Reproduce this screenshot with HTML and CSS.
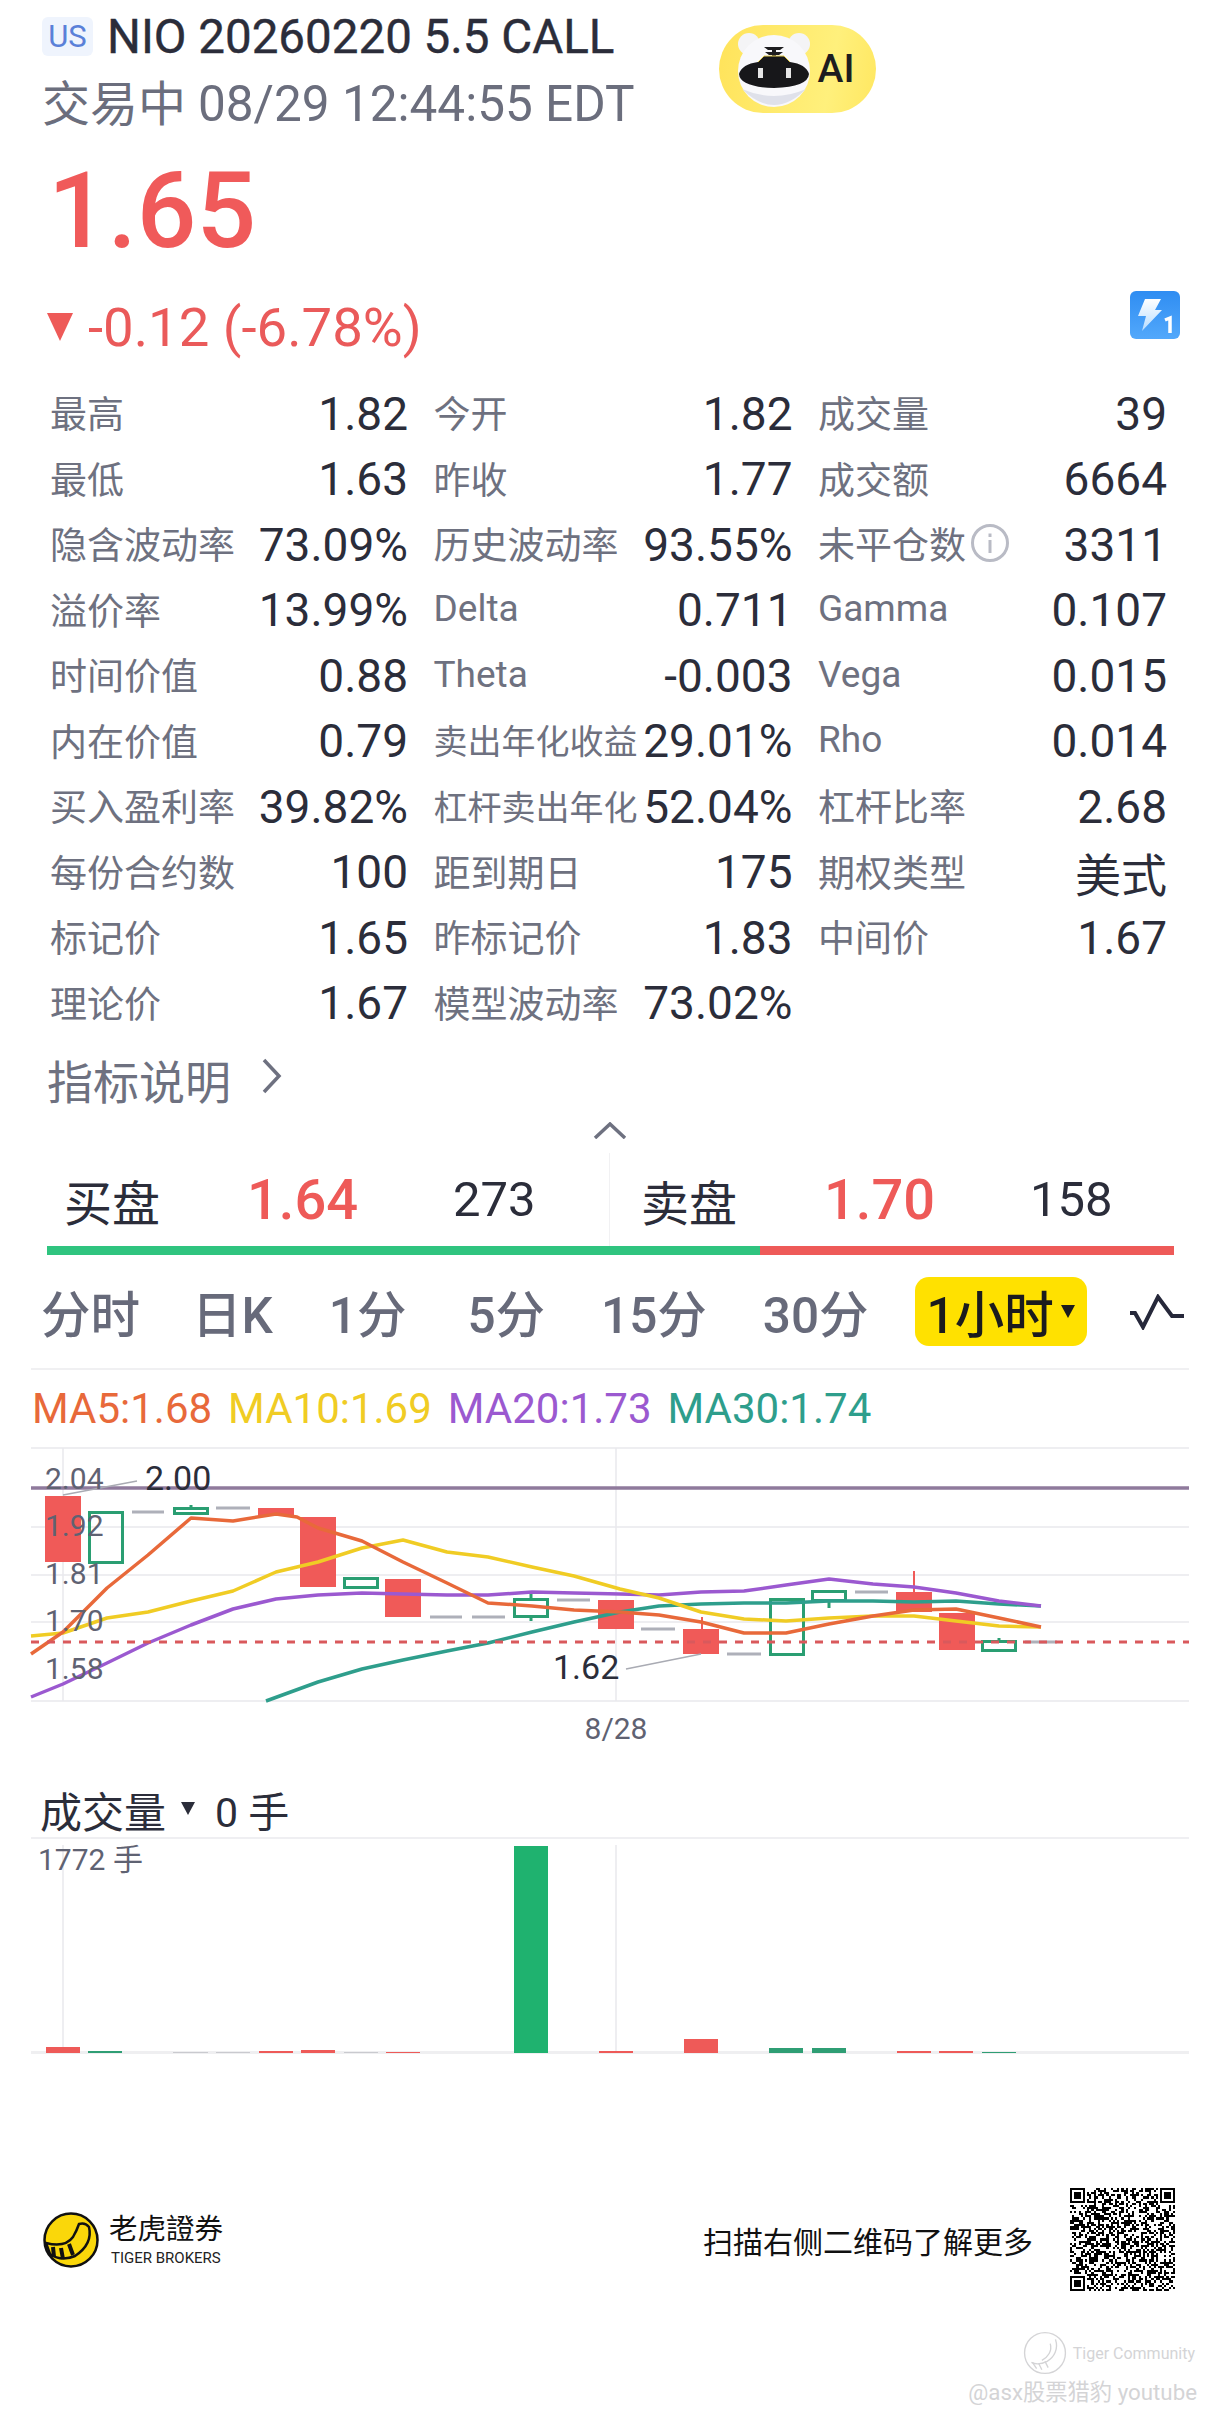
FILE: index.html
```html
<!DOCTYPE html>
<html lang="zh-CN">
<head>
  <meta charset="UTF-8">
  <meta name="viewport" content="width=device-width, initial-scale=1.0">
  <title>NIO 20260220 5.5 CALL</title>
  <link rel="stylesheet" href="styles.css">
</head>
<body>
  <div id="page">
    <header class="head">
      <div class="head-text">
        <div class="title-row">
          <span class="badge">US</span>
          <span class="title">NIO 20260220 5.5 CALL</span>
        </div>
        <div class="status">交易中 <span class="status-time">08/29 12:44:55 EDT</span></div>
      </div>
      <div class="ai-pill">
        <svg class="ai-face" viewBox="0 0 76 80" width="76" height="80">
          <circle cx="13" cy="15" r="11" fill="#f4f4f6"/>
          <circle cx="63" cy="15" r="11" fill="#f4f4f6"/>
          <ellipse cx="38" cy="42" rx="36" ry="36" fill="#f8f8fb"/>
          <path d="M6 60 Q38 92 70 60 Q38 74 6 60Z" fill="#dfe1ea"/>
          <path d="M28 18h20l-4 3h-4v2h7l-4 3h-3v3h-4v-3h-3l-4-3h7v-2h-4z" fill="#1d1d20"/>
          <path d="M3 45 Q6 35 22 33 L28 27 H48 L54 33 Q70 35 73 45 Q72 58 38 59 Q4 58 3 45Z" fill="#17171a"/>
          <path d="M22 33 L28 27 H48 L54 33" fill="none" stroke="#e6cf52" stroke-width="1"/>
          <rect x="22" y="39" width="5" height="10" fill="#e6e6e6"/>
          <rect x="50" y="39" width="5" height="10" fill="#e6e6e6"/>
        </svg>
        <span class="ai-text">AI</span>
      </div>
    </header>

    <div class="price">1.65</div>
    <div class="change">
      <span class="arrow"></span>
      <span class="change-text">-0.12 (-6.78%)</span>
      <svg class="bolt" viewBox="0 0 50 48" width="50" height="48">
        <defs>
          <linearGradient id="boltBg" x1="0" y1="0" x2="0" y2="1">
            <stop offset="0" stop-color="#2f8df2"/>
            <stop offset="1" stop-color="#52a8fb"/>
          </linearGradient>
          <linearGradient id="boltFg" x1="0" y1="0" x2="0" y2="1">
            <stop offset="0" stop-color="#ffffff"/>
            <stop offset="1" stop-color="#b6dcff"/>
          </linearGradient>
        </defs>
        <rect width="50" height="48" rx="6" fill="url(#boltBg)"/>
        <path d="M15 8h16l-6 11h7L12 40l4-15h-8z" fill="url(#boltFg)"/>
        <path d="M35 29l5-2v15" fill="none" stroke="#fff" stroke-width="3.5"/>
      </svg>
    </div>

    <div class="stats">
      <div class="cell"><span class="lbl">最高</span><span class="val">1.82</span></div>
      <div class="cell"><span class="lbl">今开</span><span class="val">1.82</span></div>
      <div class="cell"><span class="lbl">成交量</span><span class="val vr">39</span></div>

      <div class="cell"><span class="lbl">最低</span><span class="val">1.63</span></div>
      <div class="cell"><span class="lbl">昨收</span><span class="val">1.77</span></div>
      <div class="cell"><span class="lbl">成交额</span><span class="val">6664</span></div>

      <div class="cell"><span class="lbl">隐含波动率</span><span class="val">73.09%</span></div>
      <div class="cell"><span class="lbl">历史波动率</span><span class="val">93.55%</span></div>
      <div class="cell"><span class="lbl lbl-info">未平仓数
        <svg class="info" viewBox="0 0 40 40" width="40" height="40"><circle cx="20" cy="20" r="17.5" fill="none" stroke="#b9bbc5" stroke-width="3"/><rect x="18.5" y="17" width="3" height="13" fill="#b9bbc5"/><rect x="18.5" y="10.500" width="3" height="3.500" fill="#b9bbc5"/></svg>
      </span><span class="val">3311</span></div>

      <div class="cell"><span class="lbl">溢价率</span><span class="val">13.99%</span></div>
      <div class="cell"><span class="lbl">Delta</span><span class="val">0.711</span></div>
      <div class="cell"><span class="lbl">Gamma</span><span class="val">0.107</span></div>

      <div class="cell"><span class="lbl">时间价值</span><span class="val">0.88</span></div>
      <div class="cell"><span class="lbl">Theta</span><span class="val">-0.003</span></div>
      <div class="cell"><span class="lbl">Vega</span><span class="val">0.015</span></div>

      <div class="cell"><span class="lbl">内在价值</span><span class="val">0.79</span></div>
      <div class="cell"><span class="lbl lbl-small">卖出年化收益</span><span class="val">29.01%</span></div>
      <div class="cell"><span class="lbl">Rho</span><span class="val">0.014</span></div>

      <div class="cell"><span class="lbl">买入盈利率</span><span class="val">39.82%</span></div>
      <div class="cell"><span class="lbl lbl-small">杠杆卖出年化</span><span class="val">52.04%</span></div>
      <div class="cell"><span class="lbl">杠杆比率</span><span class="val">2.68</span></div>

      <div class="cell"><span class="lbl">每份合约数</span><span class="val">100</span></div>
      <div class="cell"><span class="lbl">距到期日</span><span class="val">175</span></div>
      <div class="cell"><span class="lbl">期权类型</span><span class="val">美式</span></div>

      <div class="cell"><span class="lbl">标记价</span><span class="val">1.65</span></div>
      <div class="cell"><span class="lbl">昨标记价</span><span class="val">1.83</span></div>
      <div class="cell"><span class="lbl">中间价</span><span class="val">1.67</span></div>

      <div class="cell"><span class="lbl">理论价</span><span class="val">1.67</span></div>
      <div class="cell"><span class="lbl">模型波动率</span><span class="val">73.02%</span></div>
    </div>

    <div class="explain">
      <span>指标说明</span>
      <svg viewBox="0 0 22 36" width="22" height="36"><path d="M3 2l15 16L3 34" fill="none" stroke="#6e7180" stroke-width="3.5"/></svg>
    </div>

    <svg class="collapse" viewBox="0 0 34 17" width="34" height="17"><path d="M2 16L17 2l15 14" fill="none" stroke="#6e7180" stroke-width="3.500"/></svg>

    <div class="book">
      <div class="side">
        <span class="side-lbl">买盘</span><span class="side-price">1.64</span><span class="side-qty">273</span>
      </div>
      <div class="side side-ask">
        <span class="side-lbl">卖盘</span><span class="side-price">1.70</span><span class="side-qty">158</span>
      </div>
    </div>
    <div class="ratio">
      <div class="ratio-buy"></div>
      <div class="ratio-sell"></div>
    </div>

    <nav class="tabs">
      <span class="tab">分时</span>
      <span class="tab">日K</span>
      <span class="tab">1分</span>
      <span class="tab">5分</span>
      <span class="tab">15分</span>
      <span class="tab">30分</span>
      <span class="tab-on">1小时<i class="caret"></i></span>
      <svg class="wave" viewBox="0 0 56 36" width="56" height="36"><path d="M1 19h5l8 14L29 3l14 19h12" fill="none" stroke="#26283a" stroke-width="4"/></svg>
    </nav>

    <div class="legend">
      <span class="ma5">MA5:1.68</span>
      <span class="ma10">MA10:1.69</span>
      <span class="ma20">MA20:1.73</span>
      <span class="ma30">MA30:1.74</span>
    </div>

    <svg class="chart" viewBox="0 1440 1220 345" width="1220" height="345">
      <g class="grid">
        <path d="M31 1448H1189M31 1527H1189M31 1575H1189M31 1622H1189M31 1701H1189M63 1448V1701M616 1448V1701"/>
      </g>
      <line class="high-line" x1="31" y1="1488" x2="1189" y2="1488"/>

      <g class="red">
        <rect x="45" y="1496" width="36" height="66"/>
        <rect x="258" y="1508" width="36" height="8"/>
        <rect x="300" y="1517" width="36" height="70"/>
        <rect x="385" y="1579" width="36" height="38"/>
        <rect x="598" y="1600" width="36" height="29"/>
        <rect x="683" y="1629" width="36" height="25"/>
        <rect x="701" y="1617" width="2" height="12"/>
        <rect x="896" y="1592" width="36" height="20"/>
        <rect x="913" y="1571" width="2" height="21"/>
        <rect x="939" y="1613" width="36" height="37"/>
      </g>
      <g class="green">
        <rect x="89.500" y="1512.500" width="33" height="50"/>
        <rect x="174.500" y="1508.500" width="33" height="5"/>
        <path d="M191 1505v3"/>
        <rect x="344.500" y="1578.500" width="33" height="9"/>
        <rect x="514.500" y="1599.500" width="33" height="17"/>
        <path d="M531 1592v7M531 1617v4"/>
        <rect x="770.500" y="1599.500" width="33" height="55"/>
        <rect x="812.500" y="1591.500" width="33" height="9"/>
        <path d="M829 1601v7"/>
        <rect x="982.500" y="1641.500" width="33" height="9"/>
        <path d="M999 1638v3"/>
      </g>
      <path class="flat" d="M132 1512h32M216 1508h34M430 1617h32M472 1617h33M557 1600h33M641 1629h34M727 1654h34M855 1592h33M1025 1642h32"/>

      <polyline class="line-ma30" points="266,1701 318,1682 362,1669 403,1660 447,1651 488,1643 532,1632 574,1622 620,1612 659,1606 701,1604 744,1603 786,1603 829,1601 873,1601 914,1602 956,1601 999,1604 1041,1606"/>
      <polyline class="line-ma20" points="31,1697 63,1684 107,1663 148,1643 191,1625 233,1609 276,1599 318,1595 362,1593 403,1594 447,1595 488,1595 532,1592 574,1593 620,1594 659,1595 701,1592 744,1591 786,1585 829,1579 873,1584 914,1587 956,1593 999,1601 1041,1606"/>
      <polyline class="line-ma10" points="31,1636 63,1633 107,1618 148,1612 191,1601 233,1591 276,1572 318,1562 362,1548 403,1540 447,1552 488,1557 532,1567 574,1576 620,1589 659,1598 701,1612 744,1619 786,1621 829,1618 873,1616 914,1616 956,1621 999,1626 1041,1627"/>
      <polyline class="line-ma5" points="31,1654 63,1632 107,1588 148,1555 191,1518 233,1521 276,1514 297,1517 318,1528 362,1541 403,1562 447,1583 488,1603 532,1606 574,1610 620,1612 659,1615 701,1622 744,1633 786,1633 829,1624 873,1616 914,1610 956,1609 999,1618 1041,1627"/>

      <line class="last-line" x1="31" y1="1642" x2="1189" y2="1642"/>

      <path class="leader" d="M63 1495L137 1481M626 1669L701 1654"/>
      <text class="axis" x="45" y="1489">2.04</text>
      <text class="axis" x="45" y="1536">1.92</text>
      <text class="axis" x="45" y="1584">1.81</text>
      <text class="axis" x="45" y="1631">1.70</text>
      <text class="axis" x="45" y="1679">1.58</text>
      <text class="mark" x="145" y="1490">2.00</text>
      <text class="mark" x="553" y="1679">1.62</text>
      <text class="axis date" x="616" y="1739">8/28</text>
    </svg>

    <div class="vol-head">成交量<i class="caret caret-dark"></i><span class="vol-now">0 手</span></div>

    <svg class="vol" viewBox="0 1840 1220 220" width="1220" height="220">
      <path class="grid" d="M63 1846V2053M616 1846V2053"/>
      <rect class="base" x="31" y="2052" width="1158" height="3"/>
      <rect class="vred" x="46" y="2048" width="34" height="6"/>
      <rect class="vdim" x="88" y="2052" width="34" height="2"/>
      <rect class="vgrey" x="173" y="2053" width="35" height="1"/>
      <rect class="vgrey" x="216" y="2053" width="34" height="1"/>
      <rect class="vred" x="259" y="2052" width="34" height="2"/>
      <rect class="vred" x="301" y="2051" width="34" height="3"/>
      <rect class="vgrey" x="344" y="2053" width="34" height="1"/>
      <rect class="vred" x="386" y="2053" width="34" height="1"/>
      <rect class="vbig" x="514" y="1847" width="34" height="207"/>
      <rect class="vred" x="599" y="2052" width="34" height="2"/>
      <rect class="vred" x="684" y="2040" width="34" height="14"/>
      <rect class="vdim" x="769" y="2049" width="34" height="5"/>
      <rect class="vdim" x="812" y="2049" width="34" height="5"/>
      <rect class="vred" x="897" y="2052" width="34" height="2"/>
      <rect class="vred" x="939" y="2052" width="34" height="2"/>
      <rect class="vdim" x="982" y="2053" width="34" height="1"/>
      <text class="axis" x="38" y="1871">1772 手</text>
    </svg>

    <footer class="foot">
      <div class="brand">
        <svg viewBox="0 0 56 56" width="56" height="56">
          <circle cx="28" cy="28" r="26.500" fill="#fad70a" stroke="#111" stroke-width="2.500"/>
          <path d="M36 12Q42 10 46 15Q50 32 32 44Q18 50 7 42L3 31Q22 36 30 25Q34 18 36 12Z" fill="#fad70a" stroke="#111" stroke-width="2.500"/>
          <path d="M10 35l1 10M18 36l2 11M26 32l4 11" stroke="#111" stroke-width="4"/>
        </svg>
        <div class="brand-text">
          <div class="brand-cn">老虎證券</div>
          <div class="brand-en">TIGER BROKERS</div>
        </div>
      </div>
      <div class="scan">
        <span>扫描右侧二维码了解更多</span>
        <svg id="qr" viewBox="0 0 49 49" width="105" height="103" preserveAspectRatio="none" shape-rendering="crispEdges"></svg>
      </div>
    </footer>

    <div class="mark-wrap">
      <div class="wm-top">
        <svg viewBox="0 0 42 42" width="44" height="44"><circle cx="21" cy="21" r="19.500" fill="none" stroke="#d4d4d6" stroke-width="1.300"/><path d="M31 8c3 9-1 17-8 21-6 3-11 3-15 1M26 12c2 7-2 13-8 16" fill="none" stroke="#d4d4d6" stroke-width="1.300"/><path d="M9 30l4 6M15 31l3 6M21 29l3 6" stroke="#d4d4d6" stroke-width="1.300"/></svg>
        <span>Tiger Community</span>
      </div>
      <div class="wm-user">@asx股票猎豹 youtube</div>
    </div>
  </div>
  <script src="qr.js"></script>
</body>
</html>
```

FILE: styles.css
```css
* {
  box-sizing: border-box;
}

body {
  margin: 0;
  background: #ffffff;
  font-family: Roboto, "Noto Sans CJK SC", sans-serif;
  color: #2b2d3a;
}

#page {
  width: 1220px;
  height: 2421px;
  overflow: hidden;
}

/* header */
.head {
  display: flex;
  align-items: flex-start;
  height: 125px;
  padding: 17px 0 0 42px;
}

.title-row {
  display: flex;
  align-items: center;
  gap: 14px;
  height: 39px;
}

.badge {
  width: 51px;
  height: 39px;
  border-radius: 6px;
  background: #eff4fd;
  color: #5a80d8;
  font-size: 31px;
  line-height: 39px;
  text-align: center;
}

.title {
  font-size: 47.500px;
  line-height: 44px;
  -webkit-text-stroke: 0.4px #2b2d3a;
  white-space: nowrap;
}

.status {
  margin-top: 24px;
  color: #6b6e7d;
  font-size: 48px;
  line-height: 48px;
  white-space: nowrap;
}

.status-time {
  font-size: 49.500px;
}

.ai-pill {
  display: flex;
  align-items: center;
  width: 157px;
  height: 88px;
  margin: 8px 0 0 84px;
  padding-left: 17px;
  border-radius: 44px;
  background: linear-gradient(100deg, #ffe35a, #fff07c 70%, #ffe760);
}

.ai-text {
  margin-left: 6px;
  color: #1d1d1f;
  font-size: 39px;
  font-weight: 500;
}

/* price */
.price {
  height: 104px;
  margin-top: 35px;
  padding-left: 48px;
  color: #f05a5a;
  font-size: 105px;
  font-weight: 500;
  line-height: 104px;
}

.change {
  display: flex;
  align-items: center;
  height: 60px;
  margin-top: 33px;
  padding: 0 40px 0 47px;
  color: #ea5a5a;
}

.arrow {
  width: 0;
  height: 0;
  border-left: 13px solid transparent;
  border-right: 13px solid transparent;
  border-top: 28px solid #ee5a58;
}

.change-text {
  flex: 1;
  margin-left: 15px;
  font-size: 54.500px;
  line-height: 60px;
}

.bolt {
  margin-bottom: 24px;
}

/* stats table */
.stats {
  display: grid;
  grid-template-columns: 358px 359px 349px;
  grid-auto-rows: 65.5px;
  column-gap: 25.500px;
  margin-top: 24px;
  padding-left: 50px;
}

.cell {
  display: flex;
  align-items: center;
  justify-content: space-between;
  white-space: nowrap;
}

.lbl {
  padding-bottom: 3px;
  color: #6e7180;
  font-size: 37px;
}

.lbl-small {
  font-size: 34px;
}

.lbl-info {
  display: flex;
  align-items: center;
}

.info {
  margin-left: 4px;
}

.val {
  font-size: 46px;
  color: #2b2d3a;
}

.explain {
  display: flex;
  align-items: center;
  gap: 30px;
  height: 50px;
  margin-top: 18px;
  padding-left: 47px;
  color: #6e7180;
  font-size: 46px;
}

.explain svg {
  margin-bottom: 6px;
}

.collapse {
  display: block;
  margin: 18px auto 0;
}

/* bid & ask */
.book {
  display: flex;
  height: 93px;
  margin: 14px 46px 0 47px;
}

.side {
  display: flex;
  align-items: center;
  width: 563px;
  padding-left: 17px;
  border-right: 1px solid #f1f1f3;
}

.side-ask {
  width: auto;
  padding-left: 31px;
  border-right: none;
}

.side-lbl {
  width: 183px;
  font-size: 48px;
}

.side-price {
  width: 206px;
  color: #ee5a58;
  font-size: 56px;
  font-weight: 500;
}

.side-qty {
  font-size: 49px;
}

.ratio {
  display: flex;
  height: 9px;
  margin: 0 46px 0 47px;
}

.ratio-buy {
  width: 713px;
  background: #2fc47f;
}

.ratio-sell {
  flex: 1;
  background: #ee5a58;
}

/* period tabs */
.tabs {
  display: flex;
  align-items: center;
  height: 69px;
  margin: 22px 31px 0;
  padding-left: 10px;
  gap: 56px;
  box-sizing: content-box;
  padding-bottom: 22px;
  border-bottom: 2px solid #f0f0f2;
}

.tab {
  color: #676a7a;
  font-size: 49.500px;
  font-weight: 500;
}

.tab:nth-child(2) {
  margin-left: -4px;
}

.tab:nth-child(4) {
  margin-left: 5px;
}

.tab-on {
  display: flex;
  align-items: center;
  justify-content: center;
  width: 172px;
  height: 69px;
  margin-left: -10px;
  border-radius: 14px;
  background: #ffe100;
  color: #1b1b1d;
  font-size: 49.500px;
  font-weight: 500;
}

.caret {
  display: inline-block;
  width: 0;
  height: 0;
  margin-left: 7px;
  border-left: 7px solid transparent;
  border-right: 7px solid transparent;
  border-top: 13px solid #1b1b1d;
}

.wave {
  margin-left: -14px;
}

/* chart */
.legend {
  display: flex;
  gap: 16px;
  height: 50px;
  margin-top: 14px;
  padding-left: 32px;
  font-size: 42px;
  line-height: 50px;
}

.ma5 { color: #e8693a; }
.ma10 { color: #f0cc24; }
.ma20 { color: #9b59d0; }
.ma30 { color: #2e9e8c; }

.chart {
  display: block;
  margin-top: 6px;
}

.grid {
  fill: none;
  stroke: #e9e9ed;
  stroke-width: 1.500;
}

.high-line {
  stroke: #8f7a9c;
  stroke-width: 3.500;
}

.last-line {
  stroke: #d9595c;
  stroke-width: 3;
  stroke-dasharray: 8 8;
}

.red {
  fill: #f05a58;
}

.green {
  fill: none;
  stroke: #2a9e72;
  stroke-width: 3;
}

.flat {
  fill: none;
  stroke: #aeb0b9;
  stroke-width: 3;
}

.line-ma5, .line-ma10, .line-ma20, .line-ma30 {
  fill: none;
  stroke-width: 3.500;
  stroke-linejoin: round;
}

.line-ma5 { stroke: #e8693a; }
.line-ma10 { stroke: #f0cc24; }
.line-ma20 { stroke: #9b59d0; }
.line-ma30 { stroke: #2e9e8c; }

.leader {
  fill: none;
  stroke: #a9abb3;
  stroke-width: 1.500;
}

.axis {
  fill: #5f6272;
  font-size: 30px;
}

.date {
  text-anchor: middle;
}

.mark {
  fill: #2b2d3a;
  font-size: 34px;
}

/* volume */
.vol-head {
  display: flex;
  align-items: center;
  height: 54px;
  margin: 0 31px;
  padding: 0 0 4px 9px;
  border-bottom: 2px solid #efeff2;
  font-size: 42px;
}

.caret-dark {
  margin: 0 0 2px 15px;
  border-top-color: #2b2d3a;
}

.vol-now {
  margin-left: 20px;
  font-size: 41px;
}

.vol {
  display: block;
}

.base { fill: #efeff1; }
.vred { fill: #ee5a58; }
.vdim { fill: #2f9e74; }
.vgrey { fill: #c9cacf; }
.vbig { fill: #1fb26f; }

/* footer */
.foot {
  display: flex;
  align-items: center;
  justify-content: space-between;
  height: 103px;
  margin-top: 129px;
  padding: 0 45px 0 43px;
}

.brand {
  display: flex;
  align-items: center;
  gap: 10px;
}

.brand-cn {
  color: #111;
  font-size: 28.500px;
  line-height: 32px;
  white-space: nowrap;
}

.brand-en {
  margin: 5px 0 0 2px;
  color: #222;
  font-size: 15px;
  line-height: 14px;
  white-space: nowrap;
}

.scan {
  display: flex;
  align-items: center;
  gap: 37px;
  color: #111;
  font-size: 30px;
}

.mark-wrap {
  display: flex;
  flex-direction: column;
  align-items: flex-end;
  margin-top: 40px;
  padding-right: 23px;
  color: #d4d4d6;
}

.wm-top {
  display: flex;
  align-items: center;
  gap: 6px;
  padding-right: 2px;
  font-size: 16px;
}

.wm-user {
  margin-top: 1px;
  font-size: 22.300px;
  line-height: 32px;
}
```

FILE: qr.js
```js
// no real data behind this, just a fixed noise pattern that looks like a qr code
const qr = document.getElementById("qr");
const size = 49;
let seed = 20260220;

function nextBit() {
  seed = (seed * 1103515245 + 12345) % 2147483648;
  return (seed >> 16) & 1;
}

function addRect(x, y, w, h, color) {
  const r = document.createElementNS("http://www.w3.org/2000/svg", "rect");
  r.setAttribute("x", x);
  r.setAttribute("y", y);
  r.setAttribute("width", w);
  r.setAttribute("height", h);
  r.setAttribute("fill", color);
  qr.appendChild(r);
}

function inFinder(x, y) {
  return (x < 8 && y < 8) || (x > size - 9 && y < 8) || (x < 8 && y > size - 9);
}

for (let y = 0; y < size; y++) {
  for (let x = 0; x < size; x++) {
    if (!inFinder(x, y) && nextBit()) addRect(x, y, 1, 1, "#000");
  }
}

[[0, 0], [size - 7, 0], [0, size - 7]].forEach(([x, y]) => {
  addRect(x, y, 7, 7, "#000");
  addRect(x + 1, y + 1, 5, 5, "#fff");
  addRect(x + 2, y + 2, 3, 3, "#000");
});
```
